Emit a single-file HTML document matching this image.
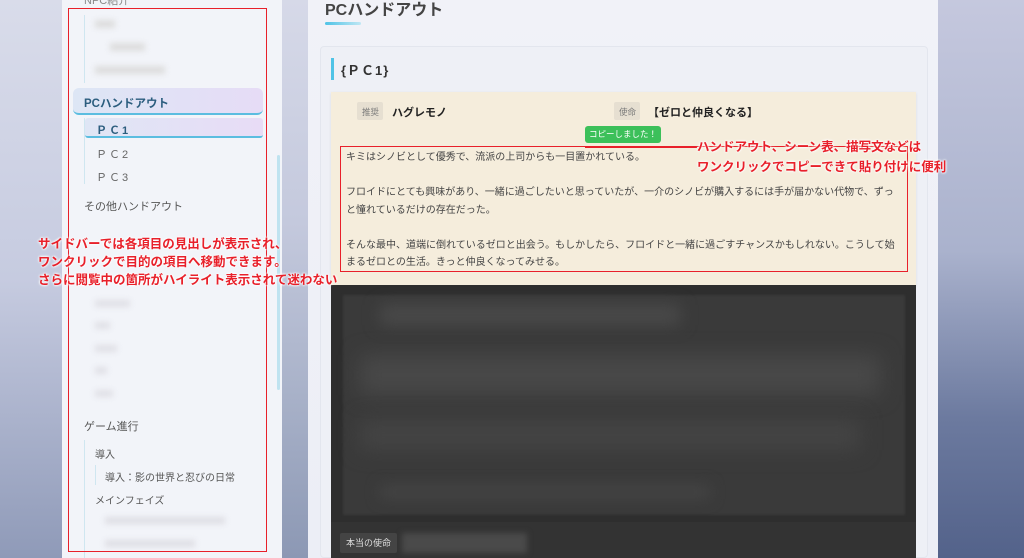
<!DOCTYPE html>
<html><head><meta charset="utf-8"><style>
*{margin:0;padding:0;box-sizing:border-box}
body{width:1024px;height:558px;overflow:hidden;position:relative;font-family:"Liberation Sans","Noto Sans CJK JP",sans-serif;background:linear-gradient(180deg,#d6d9e8 0%,#c4c9dd 40%,#a9b2c9 70%,#8c98b4 100%)}
.a{position:absolute}
.t{position:absolute;white-space:nowrap}
.blur{filter:blur(3px)}
.red{color:#e8202a;font-weight:bold;font-size:12.5px;text-shadow:0 0 2px #fff,0 0 2px #fff,0 0 3px #fff}
</style></head><body>
<div class="a" style="left:0;top:0;width:62px;height:558px;background:linear-gradient(180deg,#d9dcea,#c6cbe0 50%,#8f9ab8)"></div>
<div class="a" style="left:938px;top:0;width:86px;height:558px;background:linear-gradient(180deg,#c5c8de,#aab2cd 45%,#6c7a9f 75%,#53628a)"></div>
<!-- sidebar -->
<div class="a" style="left:62px;top:0;width:220px;height:558px;background:#f2f4f9"></div>
<div class="t" style="left:84px;top:-8px;font-size:11px;color:#888">NPC紹介</div>
<div class="a" style="left:84px;top:15px;width:1px;height:68px;background:#cfe6f0"></div>
<div class="a blur" style="left:95px;top:20px;width:20px;height:8px;background:#ddd"></div>
<div class="a blur" style="left:110px;top:43px;width:35px;height:8px;background:#ddd"></div>
<div class="a blur" style="left:95px;top:66px;width:70px;height:8px;background:#ddd"></div>
<div class="a" style="left:73px;top:88px;width:190px;height:27px;border-radius:6px;background:linear-gradient(90deg,#dde6f5,#e6dcf6);border-bottom:2px solid #5bbde0"></div>
<div class="t" style="left:84px;top:95px;font-size:11.5px;font-weight:bold;color:#2b5d7e">PCハンドアウト</div>
<div class="a" style="left:84px;top:118px;width:1px;height:66px;background:#cfe6f0"></div>
<div class="a" style="left:85px;top:118px;width:178px;height:20px;border-radius:3px;background:linear-gradient(90deg,#dfe6f5,#e8dcf6);border-bottom:2px solid #5bbde0"></div>
<div class="t" style="left:96px;top:122px;font-size:11px;font-weight:bold;color:#2b5d7e;letter-spacing:2px">ＰＣ1</div>
<div class="t" style="left:96px;top:146px;font-size:11px;color:#666;letter-spacing:2px">ＰＣ2</div>
<div class="t" style="left:96px;top:169px;font-size:11px;color:#666;letter-spacing:2px">ＰＣ3</div>
<div class="t" style="left:84px;top:198px;font-size:11px;color:#555">その他ハンドアウト</div>
<div class="a" style="left:277px;top:155px;width:3px;height:235px;background:#bfe3f0;border-radius:2px"></div>
<div class="a blur" style="left:95px;top:300px;width:35px;height:7px;background:#e0e0e6"></div>
<div class="a blur" style="left:95px;top:322px;width:15px;height:7px;background:#e0e0e6"></div>
<div class="a blur" style="left:95px;top:345px;width:22px;height:7px;background:#e0e0e6"></div>
<div class="a blur" style="left:95px;top:367px;width:12px;height:7px;background:#e0e0e6"></div>
<div class="a blur" style="left:95px;top:390px;width:18px;height:7px;background:#e0e0e6"></div>
<div class="t" style="left:84px;top:418px;font-size:11px;color:#555">ゲーム進行</div>
<div class="a" style="left:84px;top:440px;width:1px;height:118px;background:#cfe6f0"></div>
<div class="t" style="left:95px;top:446px;font-size:10px;color:#555">導入</div>
<div class="a" style="left:95px;top:465px;width:1px;height:20px;background:#cfe6f0"></div>
<div class="t" style="left:105px;top:469px;font-size:10px;color:#555">導入：影の世界と忍びの日常</div>
<div class="t" style="left:95px;top:492px;font-size:10px;color:#555">メインフェイズ</div>
<div class="a blur" style="left:105px;top:517px;width:120px;height:7px;background:#dedee4"></div>
<div class="a blur" style="left:105px;top:540px;width:90px;height:7px;background:#dedee4"></div>
<div class="a" style="left:68px;top:8px;width:199px;height:544px;border:1.5px solid #e8202a"></div>
<!-- main -->
<div class="a" style="left:308px;top:0;width:630px;height:558px;background:linear-gradient(180deg,#f1f2f8,#eceef6)"></div>
<div class="t" style="left:325px;top:-4px;font-size:16px;color:#444;font-weight:bold">PCハンドアウト</div>
<div class="a" style="left:325px;top:22px;width:36px;height:3px;background:linear-gradient(90deg,#4fc3e6,#bfe7f4);border-radius:2px"></div>
<div class="a" style="left:320px;top:46px;width:608px;height:512px;border:1px solid #e3e6ee;border-radius:4px;background:#eef0f6"></div>
<div class="a" style="left:331px;top:58px;width:3px;height:22px;background:#4fc3e6"></div>
<div class="t" style="left:341px;top:60px;font-size:13px;font-weight:bold;color:#333;letter-spacing:1px">{ＰＣ1}</div>
<div class="a" style="left:331px;top:92px;width:585px;height:194px;background:#f5eddc;box-shadow:0 1px 3px rgba(0,0,0,.08)"></div>
<div class="a" style="left:357px;top:102px;width:26px;height:18px;background:#e6dfd1;border-radius:2px"></div>
<div class="t" style="left:362px;top:106px;font-size:8.5px;color:#777">推奨</div>
<div class="t" style="left:392px;top:104px;font-size:11px;font-weight:bold;color:#222">ハグレモノ</div>
<div class="a" style="left:614px;top:102px;width:26px;height:18px;background:#e6dfd1;border-radius:2px"></div>
<div class="t" style="left:619px;top:106px;font-size:8.5px;color:#777">使命</div>
<div class="t" style="left:648px;top:104px;font-size:11px;font-weight:bold;color:#222">【ゼロと仲良くなる】</div>
<div class="a" style="left:585px;top:126px;width:76px;height:17px;background:#3cc05a;border-radius:3px;color:#fff;font-size:8.5px;text-align:center;line-height:17px">コピーしました！</div>
<div style="position:absolute;left:346px;top:149px;width:552px;font-size:10px;line-height:17.5px;color:#444">キミはシノビとして優秀で、流派の上司からも一目置かれている。<br><br>フロイドにとても興味があり、一緒に過ごしたいと思っていたが、一介のシノビが購入するには手が届かない代物で、ずっと憧れているだけの存在だった。<br><br>そんな最中、道端に倒れているゼロと出会う。もしかしたら、フロイドと一緒に過ごすチャンスかもしれない。こうして始まるゼロとの生活。きっと仲良くなってみせる。</div>
<div class="a" style="left:340px;top:146px;width:568px;height:126px;border:1.5px solid #e8202a"></div>
<div class="a" style="left:585px;top:146px;width:112px;height:1.5px;background:#e8202a"></div>
<div class="t red" style="left:697px;top:136px">ハンドアウト、シーン表、描写文などは</div>
<div class="t red" style="left:697px;top:156px">ワンクリックでコピーできて貼り付けに便利</div>
<!-- dark -->
<div class="a" style="left:331px;top:285px;width:585px;height:273px;background:#2e2e2e"></div>
<div class="a" style="left:343px;top:295px;width:562px;height:220px;background:#3a3a3a;filter:blur(1px)"></div>
<div class="a blur" style="left:380px;top:305px;width:300px;height:20px;background:#4a4a4a;filter:blur(8px)"></div>
<div class="a" style="left:360px;top:355px;width:520px;height:40px;background:#484848;filter:blur(10px)"></div>
<div class="a" style="left:360px;top:420px;width:500px;height:30px;background:#444;filter:blur(10px)"></div>
<div class="a" style="left:380px;top:485px;width:330px;height:14px;background:#444;filter:blur(7px)"></div>
<div class="a" style="left:331px;top:522px;width:585px;height:36px;background:#333"></div>
<div class="a" style="left:340px;top:533px;width:57px;height:20px;background:#444;border-radius:2px;color:#ddd;font-size:9px;text-align:center;line-height:20px">本当の使命</div>
<div class="a" style="left:402px;top:533px;width:125px;height:20px;background:#4a4a4a;filter:blur(3px)"></div>
<!-- sidebar annotation -->
<div class="t red" style="left:38px;top:235px;line-height:18px">サイドバーでは各項目の見出しが表示され、<br>ワンクリックで目的の項目へ移動できます。<br>さらに閲覧中の箇所がハイライト表示されて迷わない</div>
</body></html>
